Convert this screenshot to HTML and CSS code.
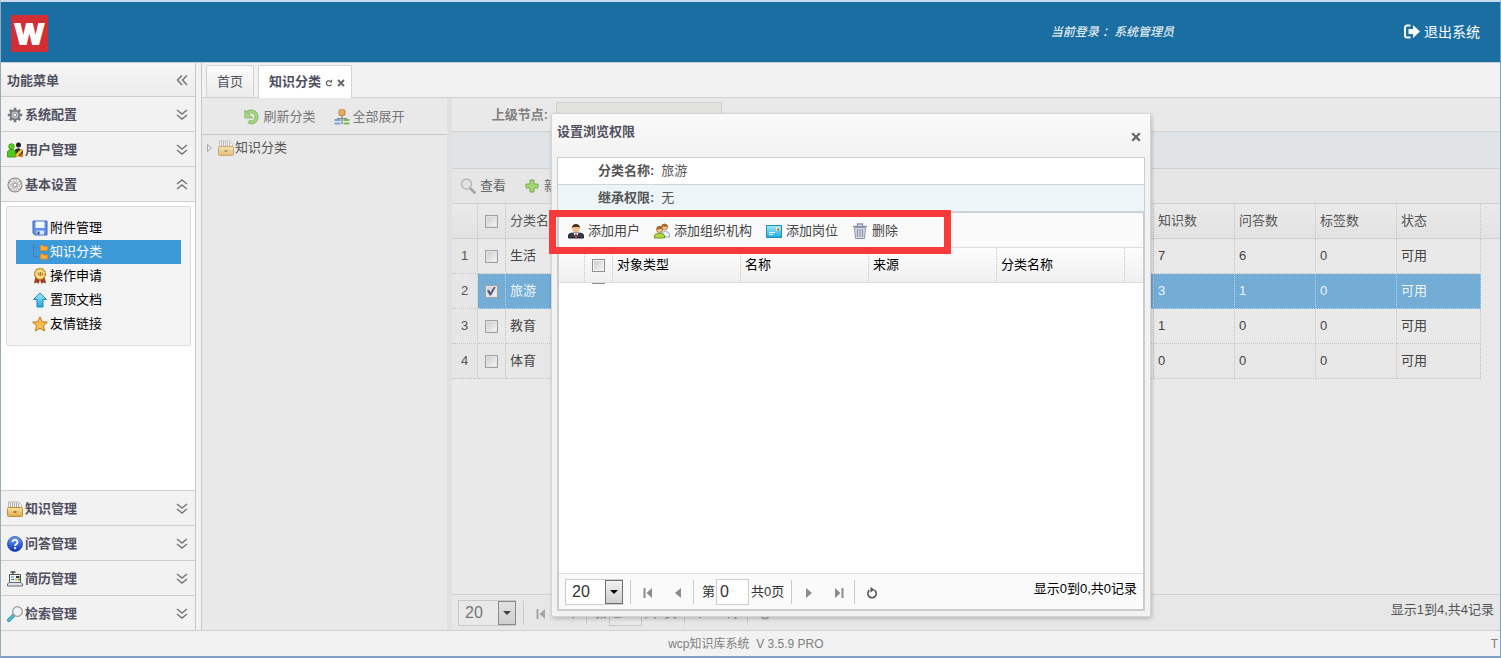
FILE: index.html
```html
<!DOCTYPE html>
<html lang="zh-CN">
<head>
<meta charset="utf-8">
<title>wcp知识库系统</title>
<link rel="stylesheet" href="styles.css">
</head>
<body>
<svg class="defs" aria-hidden="true">
  <linearGradient id="gBox" x1="0" y1="0" x2="0" y2="1"><stop offset="0" stop-color="#fbe3a5"/><stop offset="1" stop-color="#e0a94a"/></linearGradient>
  <linearGradient id="gBlue" x1="0" y1="0" x2="0" y2="1"><stop offset="0" stop-color="#6f9df5"/><stop offset="1" stop-color="#0b35b8"/></linearGradient>
  <linearGradient id="gCyan" x1="0" y1="0" x2="0" y2="1"><stop offset="0" stop-color="#a5ecff"/><stop offset="1" stop-color="#22a7e0"/></linearGradient>
  <symbol id="down2" viewBox="0 0 12 12"><path d="M1 1l5 4 5-4M1 6l5 4 5-4" fill="none" stroke="#777" stroke-width="1.500"/></symbol>
  <symbol id="up2" viewBox="0 0 12 12"><path d="M1 5l5-4 5 4M1 10l5-4 5 4" fill="none" stroke="#777" stroke-width="1.500"/></symbol>
  <symbol id="left2" viewBox="0 0 12 12"><path d="M6 .5L1.500 5 6 10M11 .5L6.500 5 11 10" fill="none" stroke="#777" stroke-width="1.500"/></symbol>
  <symbol id="cog" viewBox="0 0 16 16"><path d="M8 .8v14.400M.8 8h14.400M2.900 2.900l10.200 10.200M13.100 2.900L2.900 13.100" stroke="#74797d" stroke-width="2.600"/><circle cx="8" cy="8" r="4.400" fill="#c9ced1" stroke="#74797d" stroke-width="2"/><circle cx="8" cy="8" r="1.900" fill="#f6f6f6" stroke="#777" stroke-width=".8"/></symbol>
  <symbol id="wheel" viewBox="0 0 16 16"><circle cx="8" cy="8" r="7" fill="#efefef" stroke="#888" stroke-width="1.100"/><circle cx="8" cy="8" r="2" fill="#fff" stroke="#888"/><g fill="#fff" stroke="#999" stroke-width=".8"><circle cx="8" cy="3.600" r="1.500"/><circle cx="8" cy="12.400" r="1.500"/><circle cx="3.900" cy="6" r="1.500"/><circle cx="12.100" cy="6" r="1.500"/><circle cx="4.200" cy="10.500" r="1.500"/><circle cx="11.800" cy="10.500" r="1.500"/></g></symbol>
  <symbol id="users" viewBox="0 0 16 16"><circle cx="11.500" cy="3" r="2.500" fill="#222"/><path d="M8 12V7.500l3.500-1.500L16 8.500V14H9z" fill="#333"/><circle cx="4.500" cy="4.500" r="2.800" fill="#5bd21c" stroke="#2d8f06" stroke-width=".8"/><path d="M.5 15V9.500l2.500-2h3.500l2 2V15z" fill="#4fc91a" stroke="#2d8f06" stroke-width=".8"/><path d="M8 15l1-3 5-5 1.500 2L10.500 14.500z" fill="#f8c437" stroke="#b57c12" stroke-width=".6"/><path d="M13 13l3-2v4h-4z" fill="#e96a28"/></symbol>
  <symbol id="drawer" viewBox="0 0 16 16"><path d="M1.500 8V1h10l3 3V8z" fill="#f4f4f1" stroke="#aaa79a" stroke-width=".8"/><path d="M3.500 1.500v5M5.500 1.500v5M7.500 1.500v5M9.500 1.500v5M11.500 2.500v4" stroke="#aaa"/><rect x=".5" y="6.500" width="15" height="9" rx="1" fill="url(#gBox)" stroke="#bb8e3c"/><path d="M6.500 11h3" stroke="#855d1a" stroke-width="1.400"/></symbol>
  <symbol id="help" viewBox="0 0 16 16"><circle cx="8" cy="8" r="7.500" fill="url(#gBlue)" stroke="#1a3fa5" stroke-width=".7"/><path d="M5.500 6.300c0-3.400 5.200-3.200 5 0 0 1.700-2.400 1.700-2.400 3.600" fill="none" stroke="#fff" stroke-width="1.800"/><circle cx="8.100" cy="12.200" r="1.100" fill="#fff"/></symbol>
  <symbol id="register" viewBox="0 0 16 16"><path d="M3.500 1h5M6 1v2" stroke="#444" stroke-width="1.300"/><path d="M2.500 3.500h11v8h-11z" fill="#eef4f6" stroke="#555"/><path d="M.5 15v-2L2 11.500h12l1.500 1.500v2z" fill="#dfe5e7" stroke="#667"/><path d="M4 6h3M4 8.500h3" stroke="#38a"/><path d="M9 5h3.500v2H9z" fill="#333"/><path d="M8 8.500h2.500" stroke="#e5aa16" stroke-width="1.500"/><path d="M11 8.500h2" stroke="#393" stroke-width="1.500"/></symbol>
  <symbol id="find" viewBox="0 0 16 16"><path d="M6.500 9.500L1.800 14.200" stroke="#238aa4" stroke-width="3.400" stroke-linecap="round"/><path d="M6.500 9.500L1.800 14.200" stroke="#64d0e4" stroke-width="1.500" stroke-linecap="round"/><circle cx="10.500" cy="5.500" r="4.800" fill="#f0f4f6" stroke="#999" stroke-width="1.200"/></symbol>
  <symbol id="disk" viewBox="0 0 16 16"><path d="M1 1h14v14H3l-2-2z" fill="#5f91e6" stroke="#3e66c5"/><path d="M3.500 1.500h9v6.500h-9z" fill="#f2f7ff"/><path d="M4.500 10.500h7.500v4H4.500z" fill="#dbe6f7"/><path d="M5.500 11.500h2v3h-2z" fill="#2b4f9f"/></symbol>
  <symbol id="tree" viewBox="0 0 16 16"><path d="M1.500 1v11.500H8M1.500 4H8" fill="none" stroke="#4c6a96" stroke-dasharray="1 1"/><path d="M8.500 1.500h2.500l1 1h3.500v4h-7zM8.500 10h2.500l1 1h3.500v4h-7z" fill="#fcae38" stroke="#e8851c" stroke-width=".9"/></symbol>
  <symbol id="medal" viewBox="0 0 16 16"><path d="M4 8L2.500 15l2.500-1 1.500 1.500L8 10l1.500 5.500L11 14l2.500 1L12 8z" fill="#a93b1c" stroke="#7c2410" stroke-width=".6"/><circle cx="8" cy="6" r="5.400" fill="#ffe08a" stroke="#bf8320" stroke-width="1.400" stroke-dasharray="2.400 .5"/><path d="M6 4.500l1.200 3M8.300 4v4M10.300 4.500v3" stroke="#9a5c0f"/></symbol>
  <symbol id="arrowup" viewBox="0 0 16 16"><path d="M8 1l6.500 6.500h-3.500V15H5V7.500H1.500z" fill="url(#gCyan)" stroke="#1a86b8"/></symbol>
  <symbol id="star" viewBox="0 0 16 16"><path d="M8 .8l2.100 4.900 5.300.5-4 3.500 1.200 5.300L8 12.200 3.400 15l1.200-5.300-4-3.500 5.300-.5z" fill="#fbbd4c" stroke="#c27c1d"/></symbol>
  <symbol id="refreshgreen" viewBox="0 0 16 16"><path d="M3.500 4A5.400 5.400 0 1 1 4.500 12.600" fill="none" stroke="#86b964" stroke-width="4"/><path d="M3.500 4A5.400 5.400 0 1 1 4.500 12.600" fill="none" stroke="#a6d585" stroke-width="2.200"/><path d="M.8 1v8h8z" fill="#a6d585" stroke="#86b964" stroke-width=".8"/></symbol>
  <symbol id="org" viewBox="0 0 16 16"><path d="M8 6v9M3 9.500h10" stroke="#888" stroke-width="1.200"/><rect x="5" y=".8" width="6" height="5.500" rx="1" fill="#e8b266" stroke="#b9853e"/><path d="M.5 11h6M.5 14.500h6" stroke="#6fa9d8" stroke-width="1.900"/><path d="M9.500 11h6M9.500 14.500h6" stroke="#7fb862" stroke-width="1.900"/></symbol>
  <symbol id="lens" viewBox="0 0 16 16"><path d="M10 10l4.500 4.500" stroke="#a5a5a5" stroke-width="2.800" stroke-linecap="round"/><circle cx="6.500" cy="6" r="5" fill="#dde3e8" stroke="#b8b8b8" stroke-width="1.500"/></symbol>
  <symbol id="plus" viewBox="0 0 16 16"><path d="M6 2h4v4h4v4h-4v4H6v-4H2V6h4z" fill="#a3d66e" stroke="#7aab52"/></symbol>
  <symbol id="suit" viewBox="0 0 16 16"><path d="M.5 15v-2.500C.5 10 5 10 8 10s7.500 0 7.500 2.500V15z" fill="#353b4b" stroke="#1d222d"/><path d="M5.500 10L8 15l2.500-5z" fill="#fff"/><path d="M7.300 10.500h1.400L9 14l-1 1-1-1z" fill="#a33"/><circle cx="8" cy="5.500" r="3.800" fill="#eebd89"/><path d="M3.800 5.500C3.500-.6 12.500-.6 12.200 5.500L11 4 5 4z" fill="#43301f"/></symbol>
  <symbol id="team" viewBox="0 0 16 16"><circle cx="10.500" cy="4" r="3" fill="#f5ca91" stroke="#9a6429" stroke-width=".8"/><path d="M8 14v-4.500c3-2 7.500-.5 7.500 2V14z" fill="#eef6fb" stroke="#6497c0" stroke-width=".8"/><path d="M7.500 3.500C8 0 13.500 0 13.500 4z" fill="#a76527"/><circle cx="5.500" cy="6.500" r="3" fill="#f5ca91" stroke="#9a6429" stroke-width=".8"/><path d="M2.500 6.500C2.500 2 8.500 2 8.500 6z" fill="#a76527"/><path d="M.5 15v-2C.5 9.500 10.500 9.500 10.500 13v2z" fill="#b6d646" stroke="#6c9713"/></symbol>
  <symbol id="card" viewBox="0 0 16 16"><rect x=".5" y="2.500" width="15" height="12" fill="url(#gCyan)" stroke="#2290bd"/><path d="M3 9.500h6M3 11.500h4" stroke="#e8faff"/><path d="M10 4.500h3.500v3H10z" fill="#fff2c0"/><path d="M11 5.500h2v2h-2z" fill="#c76528"/></symbol>
  <symbol id="trash" viewBox="0 0 16 16"><path d="M2.500 4.500h11l-1 11h-9z" fill="#d8dbe7" stroke="#8f94ad"/><path d="M1 3.500h14M5.500 3V1h5v2" fill="none" stroke="#8f94ad" stroke-width="1.400"/><path d="M5.500 6v8M8 6v8M10.500 6v8" stroke="#8f94ad" stroke-width="1.200"/></symbol>
  <symbol id="exit" viewBox="0 0 16 16"><path d="M6.500 1.500H3a2 2 0 0 0-2 2v8a2 2 0 0 0 2 2h3.500" fill="none" stroke="currentColor" stroke-width="2"/><path d="M4.500 5H9V1l7 6.500L9 14v-4H4.500z" fill="currentColor"/></symbol>
  <symbol id="pfirst" viewBox="0 0 10 10"><path d="M.5 0h2v10h-2zM9 0v10L3.500 5z" fill="currentColor"/></symbol>
  <symbol id="pprev" viewBox="0 0 10 10"><path d="M8 0v10L2 5z" fill="currentColor"/></symbol>
  <symbol id="pnext" viewBox="0 0 10 10"><path d="M2 0v10l6-5z" fill="currentColor"/></symbol>
  <symbol id="plast" viewBox="0 0 10 10"><path d="M7.500 0h2v10h-2zM1 0v10l5.500-5z" fill="currentColor"/></symbol>
  <symbol id="reload" viewBox="0 0 12 12"><path d="M3.500 3.200a4.200 4.200 0 1 0 5 0" fill="none" stroke="currentColor" stroke-width="1.600"/><path d="M4.500 0l4 2.700L4.500 5.500z" fill="currentColor"/></symbol>
  <symbol id="tabreload" viewBox="0 0 8 8"><path d="M5.500 1.800H3L1.500 3.200v2L3 6.700h2l1.500-1.200" fill="none" stroke="#666" stroke-width="1.300"/><path d="M4 3.500h3.200V.3z" fill="#666"/></symbol>
  <symbol id="cross" viewBox="0 0 8 8"><path d="M1 1l6 6M7 1L1 7" stroke="#666" stroke-width="1.900"/></symbol>
</svg>

<header class="top">
  <div class="logo">W</div>
  <em class="who">当前登录 ：系统管理员</em>
  <a class="exit" href="#"><svg class="ico"><use href="#exit"/></svg>退出系统</a>
</header>

<div class="main">
  <nav class="side">
    <div class="acc title"><span>功能菜单</span><svg class="chev"><use href="#left2"/></svg></div>
    <button class="acc"><svg class="ico"><use href="#cog"/></svg><span>系统配置</span><svg class="chev"><use href="#down2"/></svg></button>
    <button class="acc"><svg class="ico"><use href="#users"/></svg><span>用户管理</span><svg class="chev"><use href="#down2"/></svg></button>
    <button class="acc"><svg class="ico"><use href="#wheel"/></svg><span>基本设置</span><svg class="chev"><use href="#up2"/></svg></button>
    <div class="open">
      <ul class="submenu">
        <li><a href="#"><svg class="ico"><use href="#disk"/></svg>附件管理</a></li>
        <li><a class="on" href="#"><svg class="ico"><use href="#tree"/></svg>知识分类</a></li>
        <li><a href="#"><svg class="ico"><use href="#medal"/></svg>操作申请</a></li>
        <li><a href="#"><svg class="ico"><use href="#arrowup"/></svg>置顶文档</a></li>
        <li><a href="#"><svg class="ico"><use href="#star"/></svg>友情链接</a></li>
      </ul>
    </div>
    <button class="acc"><svg class="ico"><use href="#drawer"/></svg><span>知识管理</span><svg class="chev"><use href="#down2"/></svg></button>
    <button class="acc"><svg class="ico"><use href="#help"/></svg><span>问答管理</span><svg class="chev"><use href="#down2"/></svg></button>
    <button class="acc"><svg class="ico"><use href="#register"/></svg><span>简历管理</span><svg class="chev"><use href="#down2"/></svg></button>
    <button class="acc last"><svg class="ico"><use href="#find"/></svg><span>检索管理</span><svg class="chev"><use href="#down2"/></svg></button>
  </nav>

  <section class="center">
    <div class="tabs">
      <button class="tab">首页</button>
      <button class="tab active">知识分类<svg class="mini"><use href="#tabreload"/></svg><svg class="mini"><use href="#cross"/></svg></button>
    </div>
    <div class="work">
      <aside class="treepane">
        <div class="treebar">
          <button class="tool"><svg class="ico"><use href="#refreshgreen"/></svg>刷新分类</button>
          <button class="tool"><svg class="ico"><use href="#org"/></svg>全部展开</button>
        </div>
        <div class="node"><svg class="twist" viewBox="0 0 8 10"><path d="M1.500 1.500v7l4-3.500z" fill="none" stroke="#aaa"/></svg><svg class="ico"><use href="#drawer"/></svg>知识分类</div>
      </aside>
      <div class="content">
        <div class="query"><label for="parent">上级节点:</label><input id="parent" type="text" readonly></div>
        <div class="strip"></div>
        <div class="bar">
          <button class="tool"><svg class="ico"><use href="#lens"/></svg>查看</button>
          <button class="tool"><svg class="ico"><use href="#plus"/></svg>新增</button>
        </div>
        <table class="grid">
          <colgroup><col class="c-no"><col class="c-ck"><col><col class="c-n"><col class="c-n"><col class="c-n"><col class="c-st"><col class="c-end"></colgroup>
          <thead><tr><th></th><th class="ck"><input type="checkbox" aria-label="全选"></th><th>分类名称</th><th>知识数</th><th>问答数</th><th>标签数</th><th>状态</th><th></th></tr></thead>
          <tbody>
            <tr><td class="no">1</td><td class="ck"><input type="checkbox" aria-label="生活"></td><td>生活</td><td>7</td><td>6</td><td>0</td><td>可用</td><td></td></tr>
            <tr class="sel"><td class="no">2</td><td class="ck"><input type="checkbox" aria-label="旅游" checked></td><td>旅游</td><td>3</td><td>1</td><td>0</td><td>可用</td><td></td></tr>
            <tr><td class="no">3</td><td class="ck"><input type="checkbox" aria-label="教育"></td><td>教育</td><td>1</td><td>0</td><td>0</td><td>可用</td><td></td></tr>
            <tr><td class="no">4</td><td class="ck"><input type="checkbox" aria-label="体育"></td><td>体育</td><td>0</td><td>0</td><td>0</td><td>可用</td><td></td></tr>
          </tbody>
        </table>
        <div class="pager dim">
          <span class="size"><select aria-label="每页条数"><option>20</option></select><i></i></span>
          <span class="sep"></span>
          <button aria-label="首页"><svg><use href="#pfirst"/></svg></button>
          <button aria-label="上一页"><svg><use href="#pprev"/></svg></button>
          <span class="sep"></span>
          <label class="page">第<input type="text" value="1"></label><span class="total">共1页</span>
          <span class="sep"></span>
          <button aria-label="下一页"><svg><use href="#pnext"/></svg></button>
          <button aria-label="末页"><svg><use href="#plast"/></svg></button>
          <span class="sep"></span>
          <button class="reload" aria-label="刷新"><svg><use href="#reload"/></svg></button>
          <span class="info">显示1到4,共4记录</span>
        </div>
      </div>
    </div>
  </section>
</div>

<footer class="foot"><span>wcp知识库系统&nbsp; V 3.5.9 PRO</span><span>T</span></footer>

<div class="dialog" role="dialog" aria-labelledby="dlg">
  <div class="dhead"><h2 id="dlg">设置浏览权限</h2><button aria-label="关闭"><svg><use href="#cross"/></svg></button></div>
  <div class="dbody">
    <dl class="facts">
      <div><dt>分类名称:</dt><dd>旅游</dd></div>
      <div class="alt"><dt>继承权限:</dt><dd>无</dd></div>
    </dl>
    <div class="panel">
      <div class="dbar">
        <button class="tool"><svg class="ico"><use href="#suit"/></svg>添加用户</button>
        <button class="tool"><svg class="ico"><use href="#team"/></svg>添加组织机构</button>
        <button class="tool"><svg class="ico"><use href="#card"/></svg>添加岗位</button>
        <button class="tool"><svg class="ico"><use href="#trash"/></svg>删除</button>
      </div>
      <table class="dgrid">
        <colgroup><col class="c-no"><col class="c-ck"><col class="c-d"><col class="c-d"><col class="c-d"><col class="c-d"><col></colgroup>
        <thead><tr><th></th><th class="ck"><input type="checkbox" aria-label="全选"></th><th>对象类型</th><th>名称</th><th>来源</th><th>分类名称</th><th></th></tr></thead>
      </table>
      <div class="empty"><span></span></div>
      <div class="pager">
        <span class="size"><select aria-label="每页条数"><option>20</option></select><i></i></span>
        <span class="sep"></span>
        <button aria-label="首页"><svg><use href="#pfirst"/></svg></button>
        <button aria-label="上一页"><svg><use href="#pprev"/></svg></button>
        <span class="sep"></span>
        <label class="page">第<input type="text" value="0"></label><span class="total">共0页</span>
        <span class="sep"></span>
        <button aria-label="下一页"><svg><use href="#pnext"/></svg></button>
        <button aria-label="末页"><svg><use href="#plast"/></svg></button>
        <span class="sep"></span>
        <button class="reload" aria-label="刷新"><svg><use href="#reload"/></svg></button>
        <span class="info">显示0到0,共0记录</span>
      </div>
    </div>
  </div>
  <div class="mark"></div>
</div>
</body>
</html>
```

FILE: styles.css
```css
* { box-sizing: border-box; }
body {
  margin: 0;
  min-height: 100vh;
  display: flex;
  flex-direction: column;
  position: relative;
  background: #f2f2f2;
  border: 1px solid #7f9fc4;
  border-top: 2px solid #c9d9ec;
  border-left-color: #9aa9b8;
  border-bottom-width: 2px;
  font: 13px/20px "Liberation Sans", "Noto Sans CJK SC", sans-serif;
  color: #444;
}
button, input, select { font: inherit; color: inherit; }
button { border: 0; background: none; padding: 0; cursor: pointer; white-space: nowrap; }
a { color: inherit; text-decoration: none; }
svg { display: block; flex: none; }
.defs { position: absolute; width: 0; height: 0; }
.ico { width: 16px; height: 16px; }

.top { height: 60px; background: #1b6ea2; display: flex; align-items: center; color: #fff; padding: 0 20px 0 10px; }
.logo {
  width: 37px; height: 37px; margin-top: 2px;
  background: #d32e33; color: #fff;
  font: bold 30px/37px "Liberation Sans", sans-serif;
  -webkit-text-stroke: 2px #fff;
  display: flex; justify-content: center;
}
.who { margin-left: auto; font-size: 12px; }
.exit { margin-left: 230px; display: flex; align-items: center; gap: 4px; font-size: 14px; }

.main { flex: 1; display: flex; border-top: 1px solid #c3cdd6; }
.side { width: 195px; flex: none; display: flex; flex-direction: column; border-right: 1px solid #c8c8c8; }
.acc {
  height: 35px; flex: none;
  display: flex; align-items: center; gap: 2px;
  padding: 2px 7px 0 6px;
  background: #f2f2f2; border-bottom: 1px solid #ccc;
  font-weight: bold; color: #505060; text-align: left;
}
.acc.title { height: 34px; background: linear-gradient(#f6f6f6, #ececec); }
.acc.last { height: 34px; border-bottom: 0; }
.acc .chev { width: 12px; height: 12px; margin-left: auto; }
.open { flex: 1; background: #fff; border-bottom: 1px solid #ccc; padding: 4px 4px 4px 5px; }
.submenu {
  margin: 0; padding: 9px; list-style: none;
  background: #f4f4f4; border: 1px solid #ddd; border-radius: 2px;
}
.submenu a { display: flex; align-items: center; gap: 2px; height: 24px; padding-left: 16px; color: #000; }
.submenu a.on { background: #3d9ad8; color: #fff; }

.center { flex: 1; min-width: 0; margin-left: 5px; border-left: 1px solid #c8c8c8; display: flex; flex-direction: column; }
.tabs { height: 35px; display: flex; gap: 4px; padding: 2px 4px 0; border-bottom: 1px solid #d0d0d0; }
.tab {
  height: 32px; padding: 0 10px; display: flex; align-items: center;
  border: 1px solid #d3d3d3; border-bottom: 0; border-radius: 2px 2px 0 0;
  background: linear-gradient(#fafafa, #ececec); color: #505060;
}
.tab.active { height: 33px; background: #fff; font-weight: bold; padding: 0 6px 0 10px; gap: 4px; }
.mini { width: 8px; height: 8px; margin-top: 2px; }
.work { flex: 1; display: flex; background: #e9e9e9; }
.treepane { width: 245px; flex: none; }
.treebar { height: 37px; display: flex; align-items: center; justify-content: center; gap: 18px; border-bottom: 1px solid #c4c4c4; padding-top: 2px; }
.tool { display: flex; align-items: center; gap: 4px; color: #777; }
.treebar .tool { gap: 3px; }
.node { display: flex; align-items: center; height: 26px; padding-left: 4px; color: #555; }
.twist { width: 8px; height: 10px; margin-right: 4px; }
.node .ico { margin-right: 1px; opacity: .7; }

.content { flex: 1; min-width: 0; display: flex; flex-direction: column; border-left: 5px solid #e1e1e1; }
.query { height: 34px; display: flex; align-items: center; border-bottom: 1px solid #d0d0d0; }
.query label { width: 96px; margin-right: 8px; text-align: right; font-weight: bold; color: #808080; }
.query input { width: 166px; height: 26px; background: #e2e3dc; border: 1px solid #d0d0d0; }
.strip { height: 37px; background: #e1e4e7; border-bottom: 1px solid #d0d0d0; }
.bar { height: 35px; display: flex; align-items: center; gap: 18px; padding-left: 8px; background: #e6e6e6; border-bottom: 1px solid #d0d0d0; }
.bar .tool { color: #666; }

table { table-layout: fixed; border-collapse: separate; border-spacing: 0; width: 100%; }
th, td { height: 35px; padding: 0 4px; text-align: left; font-weight: normal; white-space: nowrap; }
.c-no { width: 26px; }
.c-ck { width: 28px; }
.c-n { width: 81px; }
.c-st { width: 84px; }
.c-end { width: 19px; }
.c-d { width: 128px; }
.grid th { background: linear-gradient(#eaeaea, #e2e2e2); border-right: 1px dotted #c4c4c4; border-bottom: 1px solid #cfcfcf; color: #555; }
.grid td { border-right: 1px dotted #c4c4c4; border-bottom: 1px dotted #c4c4c4; }
.grid tr:nth-child(even) td { background: #e7e7e7; }
.grid tr th:last-child { border-right: 0; }
.grid tr td:last-child { border: 0; background: none; }
.grid tr.sel td { background: #73acd4; color: #eef6fc; border-color: #b9d6ea; }
.grid tr.sel td:last-child { background: none; }
.grid tr td.no, .grid tr.sel td.no { background: #e6e6e6; color: #555; border-color: #c4c4c4; text-align: center; padding: 0; }
th.ck, td.ck { text-align: center; padding: 0; }
input[type="checkbox"] {
  appearance: none; display: block; width: 13px; height: 13px; margin: 0 auto;
  border: 1px solid #8e8f8f; background: linear-gradient(135deg, #ccc, #f6f6f6);
  box-shadow: inset 0 0 0 1px #f4f4f4;
}
.grid input[type="checkbox"] { border-color: #a0a0a0; box-shadow: inset 0 0 0 1px #e4e4e4; }
input[type="checkbox"]:checked::after {
  content: ""; display: block; width: 9px; height: 9px; margin: 1px;
  background: #555c7c; clip-path: polygon(0 45%, 22% 36%, 38% 64%, 80% 0, 100% 0, 46% 100%, 30% 100%);
}

.pager { height: 36px; margin-top: auto; display: flex; align-items: center; padding: 0 6px; background: #fafafa; border-top: 1px solid #ddd; color: #333; }
.size { position: relative; width: 58px; height: 26px; margin-right: 7px; display: flex; }
.size select { appearance: none; width: 100%; border: 1px solid #ccc; background: #fff; padding: 0 22px 0 6px; font-size: 16px; border-radius: 0; }
.size i {
  position: absolute; right: 0; top: 1px; width: 18px; height: 24px; pointer-events: none;
  border: 1px solid #707070; background: linear-gradient(#f2f2f2, #cfcfcf);
}
.size i::after { content: ""; position: absolute; left: 4px; top: 9px; border: 4px solid transparent; border-top-color: #000; border-bottom: 0; }
.sep { width: 1px; height: 24px; background: #ccc; margin-right: 2px; }
.pager button { width: 30px; height: 24px; padding-top: 2px; display: flex; align-items: center; justify-content: center; color: #8c8c8c; }
.pager button svg { width: 10px; height: 10px; }
.page { display: flex; align-items: center; gap: 1px; margin-left: 6px; }
.page input { width: 33px; height: 26px; border: 1px solid #ccc; background: #fff; padding: 0 3px; font-size: 16px; }
.total { margin: 0 7px 0 2px; }
.pager button.reload { color: #555; }
.pager button.reload svg { width: 12px; height: 12px; }
.info { margin-left: auto; padding-bottom: 6px; color: #000; }
.pager.dim { background: #e7e7e7; border-color: #d0d0d0; color: #999; }
.dim .size select, .dim .page input { background: #e9e9e9; border-color: #c8c8c8; }
.dim .size select { color: #777; }
.dim .page input { color: #aaa; }
.dim .size i { border-color: #8a8a8a; background: linear-gradient(#e2e2e2, #cfcfcf); }
.dim .size i::after { border-top-color: #444; }
.pager.dim button, .pager.dim button.reload { color: #a5a5a5; }
.dim .info { color: #555; }

.foot { height: 26px; border-top: 1px solid #d0d0d0; display: flex; align-items: center; font-size: 12px; color: #808080; padding-right: 2px; }
.foot span:first-child { flex: 1; text-align: center; }

.dialog {
  position: absolute; left: 550px; top: 111px; width: 600px; height: 504px;
  display: flex; flex-direction: column; padding: 0 5px 5px;
  background: linear-gradient(#fafafa, #f2f2f2 44px);
  border: 1px solid #d4d4d4; border-radius: 2px; box-shadow: 1px 2px 4px rgba(0, 0, 0, .2);
}
.dhead { height: 43px; flex: none; display: flex; justify-content: space-between; align-items: center; padding: 0 4px 7px 0; }
.dhead h2 { margin: 0; font-size: 13px; color: #505060; }
.dhead button { padding: 10px 0 0; }
.dhead svg { width: 10px; height: 10px; }
.dbody { flex: 1; display: flex; flex-direction: column; background: #fff; border: 1px solid #ccc; }
.facts { margin: 0; }
.facts div { height: 27px; display: flex; align-items: center; border-bottom: 1px solid #ccd6dc; padding-left: 40px; gap: 7px; color: #555; }
.facts .alt { background: #edf5f9; }
.facts dt { font-weight: bold; }
.facts dd { margin: 0; }
.panel { flex: 1; display: flex; flex-direction: column; border: 1px solid #ccc; }
.dbar { height: 35px; flex: none; display: flex; align-items: center; gap: 14px; padding: 2px 9px 0; background: #fafafa; border-bottom: 1px solid #ddd; }
.dbar .tool { color: #444; }
.dgrid th { background: linear-gradient(#fdfdfd, #f0f0f0); border-right: 1px dotted #c8c8c8; border-bottom: 1px solid #ddd; color: #000; }
.dgrid th:last-child { border-right: 0; }
.empty { flex: 1; padding-left: 33px; }
.empty span { display: block; width: 13px; height: 1px; background: #8e8f8f; }
.mark { position: absolute; left: -3px; top: 96px; width: 402px; height: 44px; border: 7px solid #f93a3a; }
```
